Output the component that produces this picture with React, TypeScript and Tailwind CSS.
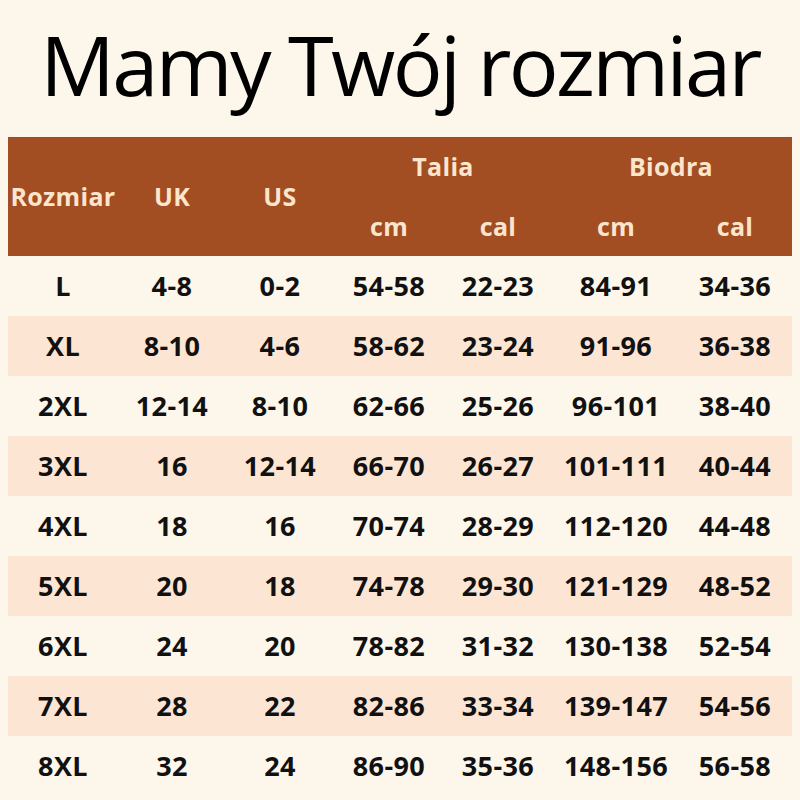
const cols = 'grid grid-cols-[110px_108px_108px_110px_108px_128px_110px]';

const rows: string[][] = [
  ['L', '4-8', '0-2', '54-58', '22-23', '84-91', '34-36'],
  ['XL', '8-10', '4-6', '58-62', '23-24', '91-96', '36-38'],
  ['2XL', '12-14', '8-10', '62-66', '25-26', '96-101', '38-40'],
  ['3XL', '16', '12-14', '66-70', '26-27', '101-111', '40-44'],
  ['4XL', '18', '16', '70-74', '28-29', '112-120', '44-48'],
  ['5XL', '20', '18', '74-78', '29-30', '121-129', '48-52'],
  ['6XL', '24', '20', '78-82', '31-32', '130-138', '52-54'],
  ['7XL', '28', '22', '82-86', '33-34', '139-147', '54-56'],
  ['8XL', '32', '24', '86-90', '35-36', '148-156', '56-58'],
];

export default function App() {
  return (
    <div className="w-[800px] h-[800px] overflow-hidden bg-[#fdf6ea] font-['Open_Sans',sans-serif]">
      <h1 className="h-[137px] flex items-center justify-center pb-[10px] text-[83px] leading-none text-black tracking-[-2.6px]">
        Mamy Twój rozmiar
      </h1>

      <div className="mx-[8px]">
        {/* naglowek */}
        <div className={`${cols} grid-rows-[60px_59px] bg-[#a34d22] text-[#fbe6cd] font-bold text-[25px] tracking-[0.3px]`}>
          <div className="row-span-2 flex items-center justify-center">Rozmiar</div>
          <div className="row-span-2 flex items-center justify-center">UK</div>
          <div className="row-span-2 flex items-center justify-center">US</div>
          <div className="col-span-2 flex items-center justify-center">Talia</div>
          <div className="col-span-2 flex items-center justify-center">Biodra</div>
          <div className="flex items-center justify-center">cm</div>
          <div className="flex items-center justify-center">cal</div>
          <div className="flex items-center justify-center">cm</div>
          <div className="flex items-center justify-center">cal</div>
        </div>

        {rows.map((r, i) => (
          <div
            key={r[0]}
            className={`${cols} h-[60px] items-center text-[27px] font-bold tracking-[0.4px] text-[#111] ${i % 2 === 1 ? 'bg-[#fde5d4]' : ''}`}
          >
            {r.map((c, j) => (
              <div key={j} className="text-center">
                {c}
              </div>
            ))}
          </div>
        ))}
      </div>
    </div>
  );
}
